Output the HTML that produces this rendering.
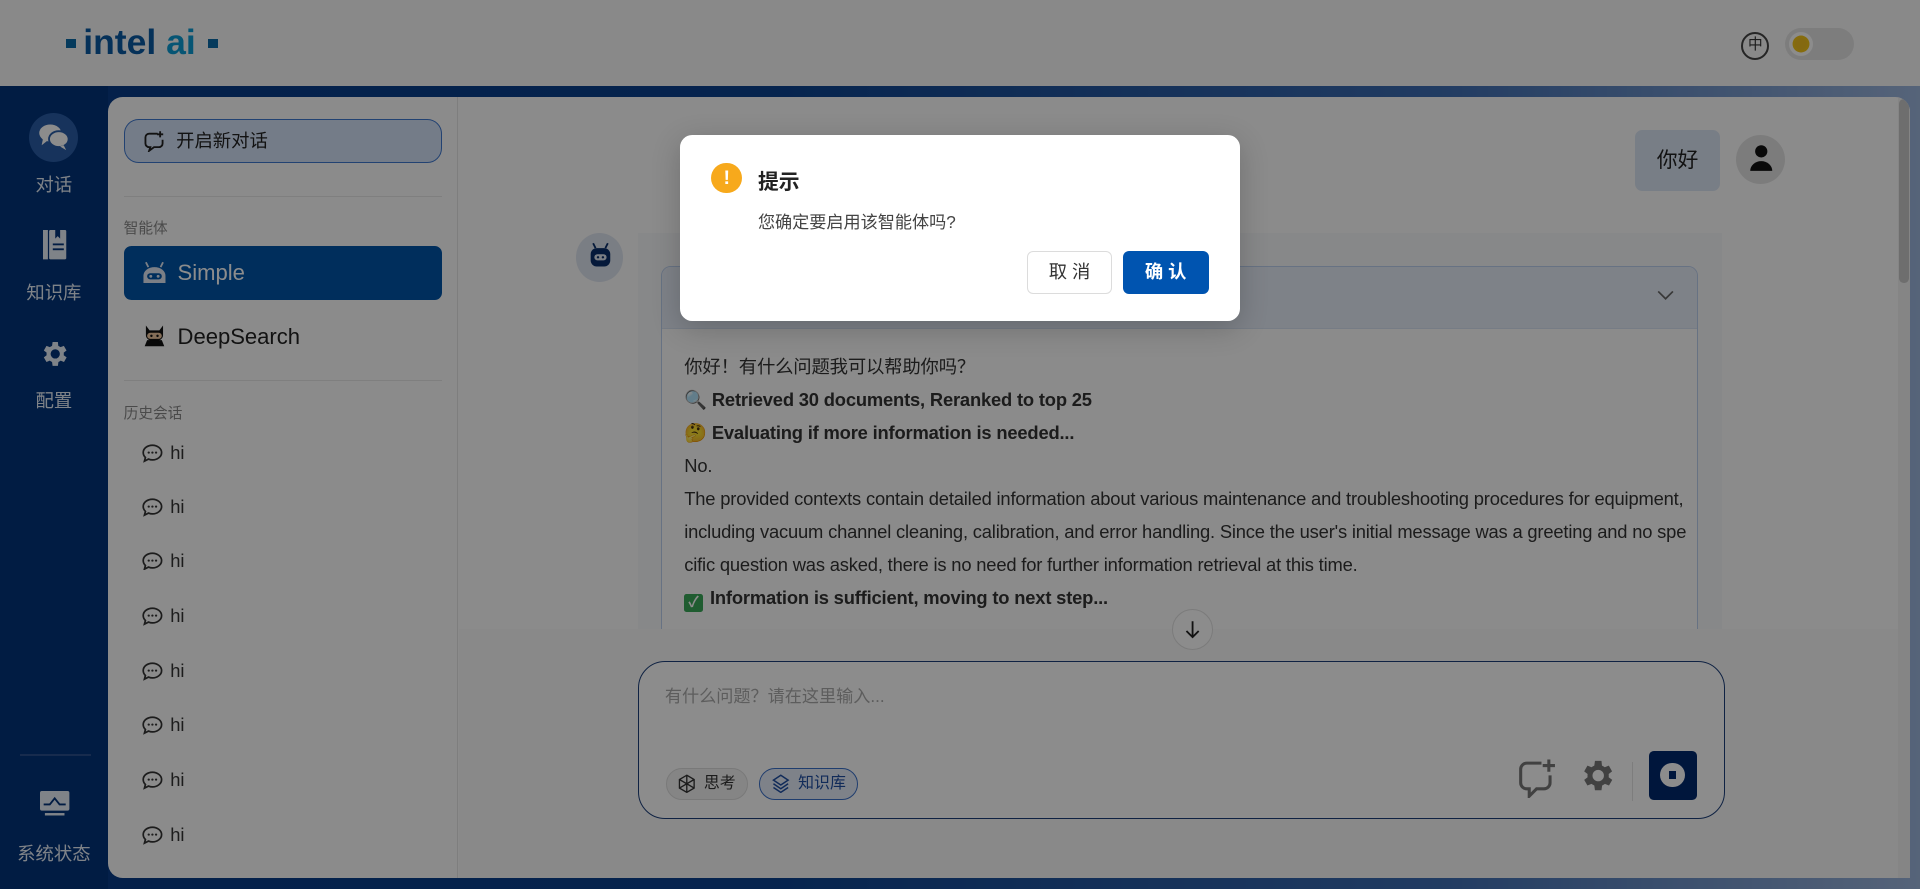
<!DOCTYPE html>
<html><head><meta charset="utf-8">
<style>
*{box-sizing:border-box;margin:0;padding:0}
html,body{width:1920px;height:889px;overflow:hidden}
body{font-family:"Liberation Sans","Noto Sans CJK SC",sans-serif;background:#fff}
#root{zoom:1.2244898;width:1568px;height:726px;position:relative;overflow:hidden;background:linear-gradient(90deg,#073a86 0%,#0b428f 40%,#3d6db3 75%,#9db6dd 100%)}
.abs{position:absolute}
.header{left:0;top:0;width:1568px;height:70px;background:#fafafa}
.logo{left:54px;top:18px;font-size:29px;font-weight:bold;color:#0a5aa3;letter-spacing:0}
.logo .ai{color:#0c9bd4}
.sq{display:inline-block;width:8px;height:8px;background:#0a6ba8;vertical-align:middle;margin:0 6px 2px 0}
.nav{left:0;top:70px;width:88px;height:656px;background:#03337a}
.navitem{position:absolute;left:0;width:88px;text-align:center;color:#e8eef8;font-size:15px}
.panel{left:88px;top:79px;width:1472px;height:638px;background:#fdfdfd;border-radius:12px 12px 0 12px;overflow:hidden}
.side{left:0;top:0;width:286px;height:638px;border-right:1px solid #e6e6e6}
.newbtn{left:13px;top:18px;width:260px;height:36px;border:1px solid #3f78cf;border-radius:12px;background:#d4e2f7;font-size:15px;color:#222;padding-left:42px;line-height:34px}
.hr{height:1px;background:#e8e8e8;left:13px;width:260px}
.lbl{left:13px;font-size:12px;color:#888}
.agent{left:13px;width:260px;height:44px;border-radius:6px;font-size:18px;padding-left:44px;line-height:44px;color:#222}
.hi{left:28px;font-size:15px;color:#333}
.hi svg{vertical-align:-3px;margin-right:6px}
.msgtxt{font-size:15px;color:#333;line-height:27px;letter-spacing:-0.15px}
.overlay{left:0;top:0;width:1568px;height:726px;background:rgba(0,0,0,0.45)}
.dlg{left:555px;top:110px;width:458px;height:152px;background:#fff;border-radius:10px;box-shadow:0 6px 24px rgba(0,0,0,.2)}
</style></head><body><div id="root">
<div class="abs header"></div>
<div class="abs logo"><span class="sq"></span>intel <span class="ai">ai</span> <span class="sq" style="margin-left:2px"></span></div>
<div class="abs" style="left:1422px;top:26px;width:23px;height:23px;border:2px solid #444;border-radius:50%;font-size:12px;text-align:center;line-height:19px;color:#333">中</div>
<div class="abs" style="left:1458px;top:23px;width:56px;height:26px;border-radius:13px;background:#e4e4e4"></div>
<div class="abs" style="left:1461px;top:26px;width:20px;height:20px;border-radius:50%;background:#fff"></div>
<div class="abs" style="left:1466px;top:31px;width:10px;height:10px;border-radius:50%;background:#f0c020;box-shadow:0 0 0 2px #f5c518"></div>

<div class="abs nav"></div>
<div class="abs" style="left:24px;top:92px;width:40px;height:40px;border-radius:50%;background:#2a5ea8"></div>
<svg class="abs" style="left:31px;top:100px" width="26" height="24" viewBox="0 0 26 24"><ellipse cx="10" cy="9" rx="9" ry="7" fill="#fff"/><path d="M4 14 L3 19 L8 15Z" fill="#fff"/><ellipse cx="17" cy="14" rx="8" ry="6.5" fill="#fff" stroke="#2a5ea8" stroke-width="1.5"/><path d="M21 19 L23 23 L18 20Z" fill="#fff"/></svg>
<div class="navitem" style="top:140px">对话</div>
<svg class="abs" style="left:35px;top:188px" width="20" height="24" viewBox="0 0 20 24"><rect x="0" y="0" width="4" height="24" fill="#e8eef8"/><rect x="5" y="0" width="14" height="24" rx="1" fill="#e8eef8"/><path d="M10 0v7l2-2 2 2V0" fill="#03337a"/><rect x="8" y="11" width="9" height="1.5" fill="#03337a"/><rect x="8" y="15" width="9" height="1.5" fill="#03337a"/></svg>
<div class="navitem" style="top:228px">知识库</div>
<svg class="abs" style="left:31px;top:276px" width="26" height="26" viewBox="0 0 24 24"><path fill="#e8eef8" d="M19.4 13a7.5 7.5 0 0 0 0-2l2.1-1.6-2-3.5-2.5 1a7 7 0 0 0-1.7-1L15 3h-4l-.4 2.9a7 7 0 0 0-1.7 1l-2.5-1-2 3.5L6.5 11a7.5 7.5 0 0 0 0 2l-2.1 1.6 2 3.5 2.5-1a7 7 0 0 0 1.7 1L11 21h4l.4-2.9a7 7 0 0 0 1.7-1l2.5 1 2-3.5zM13 15.5a3.5 3.5 0 1 1 0-7 3.5 3.5 0 0 1 0 7z"/></svg>
<div class="navitem" style="top:316px">配置</div>
<div class="abs" style="left:16px;top:616px;width:58px;height:1px;background:#2a4f8c"></div>
<svg class="abs" style="left:33px;top:646px" width="24" height="22" viewBox="0 0 24 22"><rect x="0" y="0" width="24" height="16" rx="1.5" fill="#e8eef8"/><path d="M3 11h5l4-5 4 5h5" stroke="#03337a" stroke-width="1.5" fill="none"/><rect x="4" y="18" width="16" height="2" fill="#e8eef8"/></svg>
<div class="navitem" style="top:686px">系统状态</div>

<div class="abs panel">
 <div class="abs side">
  <div class="abs newbtn">开启新对话</div>
  <svg class="abs" style="left:29px;top:27px" width="18" height="18" viewBox="0 0 18 18"><path d="M12 3H5a3 3 0 0 0-3 3v5a3 3 0 0 0 3 3h1l-1 3 4-3h4a3 3 0 0 0 3-3V8" stroke="#222" stroke-width="1.5" fill="none"/><path d="M14 1v5M11.5 3.5h5" stroke="#222" stroke-width="1.5"/></svg>
  <div class="abs hr" style="top:81px"></div>
  <div class="abs lbl" style="top:98px">智能体</div>
  <div class="abs agent" style="top:122px;background:#0054a8;color:#fff">Simple</div>
  <svg class="abs" style="left:27px;top:134px" width="22" height="20" viewBox="0 0 22 20"><path d="M4 1l2 4M18 1l-2 4" stroke="#e0e8f5" stroke-width="1.5"/><path d="M2 12a9 7 0 0 1 18 0v6H2z" fill="#e0e8f5"/><rect x="5" y="10" width="12" height="5" rx="2.5" fill="#0054a8"/><circle cx="8" cy="12.5" r="1.2" fill="#e0e8f5"/><circle cx="14" cy="12.5" r="1.2" fill="#e0e8f5"/></svg>
  <div class="abs agent" style="top:174px">DeepSearch</div>
  <svg class="abs" style="left:27px;top:185px" width="22" height="20" viewBox="0 0 22 20"><path d="M4 2l3 4h8l3-4v8a7 5 0 0 1-14 0z" fill="#111"/><rect x="5" y="8" width="12" height="5" rx="2.5" fill="#f0c8a0"/><circle cx="8.5" cy="10.5" r="1" fill="#111"/><circle cx="13.5" cy="10.5" r="1" fill="#111"/><path d="M3 19l2-5h12l2 5z" fill="#111"/></svg>
  <div class="abs hr" style="top:231px"></div>
  <div class="abs lbl" style="top:249px">历史会话</div>
  <div class="abs hi" style="top:282px"><svg width="17" height="15" viewBox="0 0 17 15"><path d="M8.5 1C4.4 1 1 3.6 1 7c0 1.5.7 2.9 1.8 4L2 14l3.3-1.7c1 .4 2 .7 3.2.7 4.1 0 7.5-2.7 7.5-6S12.6 1 8.5 1z" stroke="#333" stroke-width="1.4" fill="none"/><circle cx="5.5" cy="7" r="0.9" fill="#333"/><circle cx="8.5" cy="7" r="0.9" fill="#333"/><circle cx="11.5" cy="7" r="0.9" fill="#333"/></svg>hi</div>
  <div class="abs hi" style="top:326px"><svg width="17" height="15" viewBox="0 0 17 15"><path d="M8.5 1C4.4 1 1 3.6 1 7c0 1.5.7 2.9 1.8 4L2 14l3.3-1.7c1 .4 2 .7 3.2.7 4.1 0 7.5-2.7 7.5-6S12.6 1 8.5 1z" stroke="#333" stroke-width="1.4" fill="none"/><circle cx="5.5" cy="7" r="0.9" fill="#333"/><circle cx="8.5" cy="7" r="0.9" fill="#333"/><circle cx="11.5" cy="7" r="0.9" fill="#333"/></svg>hi</div>
  <div class="abs hi" style="top:370px"><svg width="17" height="15" viewBox="0 0 17 15"><path d="M8.5 1C4.4 1 1 3.6 1 7c0 1.5.7 2.9 1.8 4L2 14l3.3-1.7c1 .4 2 .7 3.2.7 4.1 0 7.5-2.7 7.5-6S12.6 1 8.5 1z" stroke="#333" stroke-width="1.4" fill="none"/><circle cx="5.5" cy="7" r="0.9" fill="#333"/><circle cx="8.5" cy="7" r="0.9" fill="#333"/><circle cx="11.5" cy="7" r="0.9" fill="#333"/></svg>hi</div>
  <div class="abs hi" style="top:415px"><svg width="17" height="15" viewBox="0 0 17 15"><path d="M8.5 1C4.4 1 1 3.6 1 7c0 1.5.7 2.9 1.8 4L2 14l3.3-1.7c1 .4 2 .7 3.2.7 4.1 0 7.5-2.7 7.5-6S12.6 1 8.5 1z" stroke="#333" stroke-width="1.4" fill="none"/><circle cx="5.5" cy="7" r="0.9" fill="#333"/><circle cx="8.5" cy="7" r="0.9" fill="#333"/><circle cx="11.5" cy="7" r="0.9" fill="#333"/></svg>hi</div>
  <div class="abs hi" style="top:460px"><svg width="17" height="15" viewBox="0 0 17 15"><path d="M8.5 1C4.4 1 1 3.6 1 7c0 1.5.7 2.9 1.8 4L2 14l3.3-1.7c1 .4 2 .7 3.2.7 4.1 0 7.5-2.7 7.5-6S12.6 1 8.5 1z" stroke="#333" stroke-width="1.4" fill="none"/><circle cx="5.5" cy="7" r="0.9" fill="#333"/><circle cx="8.5" cy="7" r="0.9" fill="#333"/><circle cx="11.5" cy="7" r="0.9" fill="#333"/></svg>hi</div>
  <div class="abs hi" style="top:504px"><svg width="17" height="15" viewBox="0 0 17 15"><path d="M8.5 1C4.4 1 1 3.6 1 7c0 1.5.7 2.9 1.8 4L2 14l3.3-1.7c1 .4 2 .7 3.2.7 4.1 0 7.5-2.7 7.5-6S12.6 1 8.5 1z" stroke="#333" stroke-width="1.4" fill="none"/><circle cx="5.5" cy="7" r="0.9" fill="#333"/><circle cx="8.5" cy="7" r="0.9" fill="#333"/><circle cx="11.5" cy="7" r="0.9" fill="#333"/></svg>hi</div>
  <div class="abs hi" style="top:549px"><svg width="17" height="15" viewBox="0 0 17 15"><path d="M8.5 1C4.4 1 1 3.6 1 7c0 1.5.7 2.9 1.8 4L2 14l3.3-1.7c1 .4 2 .7 3.2.7 4.1 0 7.5-2.7 7.5-6S12.6 1 8.5 1z" stroke="#333" stroke-width="1.4" fill="none"/><circle cx="5.5" cy="7" r="0.9" fill="#333"/><circle cx="8.5" cy="7" r="0.9" fill="#333"/><circle cx="11.5" cy="7" r="0.9" fill="#333"/></svg>hi</div>
  <div class="abs hi" style="top:594px"><svg width="17" height="15" viewBox="0 0 17 15"><path d="M8.5 1C4.4 1 1 3.6 1 7c0 1.5.7 2.9 1.8 4L2 14l3.3-1.7c1 .4 2 .7 3.2.7 4.1 0 7.5-2.7 7.5-6S12.6 1 8.5 1z" stroke="#333" stroke-width="1.4" fill="none"/><circle cx="5.5" cy="7" r="0.9" fill="#333"/><circle cx="8.5" cy="7" r="0.9" fill="#333"/><circle cx="11.5" cy="7" r="0.9" fill="#333"/></svg>hi</div>
 </div>
 <div class="abs" style="left:1462px;top:0;width:10px;height:638px;background:#f3f3f3"></div>
 <div class="abs" style="left:1463px;top:2px;width:8px;height:150px;background:#c8c8c8;border-radius:4px"></div>
</div>

<div class="abs" style="left:1335px;top:106px;width:70px;height:50px;background:#dbe5f4;border-radius:6px;font-size:17px;line-height:50px;text-align:center;color:#222">你好</div>
<div class="abs" style="left:1418px;top:110px;width:40px;height:40px;background:#e2e2e2;border-radius:50%"></div>
<svg class="abs" style="left:1428px;top:118px" width="20" height="24" viewBox="0 0 20 24"><circle cx="10" cy="6" r="5" fill="#111"/><path d="M1 22a9 8 0 0 1 18 0z" fill="#111"/></svg>
<div class="abs" style="left:470px;top:190px;width:39px;height:40px;background:#dfe5f0;border-radius:50%"></div>
<svg class="abs" style="left:479px;top:198px" width="22" height="22" viewBox="0 0 22 22"><path d="M5 1l2 4M17 1l-2 4" stroke="#0a2f6a" stroke-width="1.5"/><rect x="3" y="5" width="16" height="15" rx="5" fill="#0a2f6a"/><rect x="6" y="10" width="10" height="5" rx="2.5" fill="#dfe5f0"/><circle cx="9" cy="12.5" r="1" fill="#0a2f6a"/><circle cx="13" cy="12.5" r="1" fill="#0a2f6a"/></svg>
<div class="abs" style="left:521px;top:190px;width:885px;height:324px;background:#f6f7f9"></div>
<div class="abs" style="left:540px;top:217px;width:847px;height:300px;border:1px solid #bccfee;border-bottom:none;border-radius:8px 8px 0 0;background:#fdfdfd;overflow:hidden">
 <div style="height:51px;background:#e6edf8;border-bottom:1px solid #d8e2f2"></div>
 <div class="abs msgtxt" style="left:18px;top:68px;width:822px;word-break:break-all">你好！有什么问题我可以帮助你吗？<br><b>🔍 Retrieved 30 documents, Reranked to top 25</b><br><b>🤔 Evaluating if more information is needed...</b><br>No.<br>The provided contexts contain detailed information about various maintenance and troubleshooting procedures for equipment, including vacuum channel cleaning, calibration, and error handling. Since the user's initial message was a greeting and no specific question was asked, there is no need for further information retrieval at this time.<br><b><span style="display:inline-block;width:15px;height:15px;background:#3aa858;border-radius:2px;color:#fff;font-size:12px;line-height:15px;text-align:center;vertical-align:-2px;margin-right:6px">✓</span>Information is sufficient, moving to next step...</b></div>
</div>
<svg class="abs" style="left:1353px;top:236px" width="14" height="10" viewBox="0 0 14 10"><path d="M1 2l6 6 6-6" stroke="#666" stroke-width="1.4" fill="none"/></svg>
<div class="abs" style="left:375px;top:514px;width:1175px;height:203px;background:#fafafa"></div>
<div class="abs" style="left:957px;top:497px;width:34px;height:34px;border-radius:50%;background:#fff;border:1px solid #e0e0e0"></div>
<svg class="abs" style="left:967px;top:506px" width="14" height="16" viewBox="0 0 14 16"><path d="M7 1v13M2 9l5 5 5-5" stroke="#222" stroke-width="1.5" fill="none"/></svg>
<div class="abs" style="left:521px;top:540px;width:888px;height:129px;border:1.5px solid #1c3f7a;border-radius:22px;background:#fff"></div>
<div class="abs" style="left:543px;top:557px;font-size:14px;color:#aaa">有什么问题？请在这里输入...</div>
<div class="abs" style="left:544px;top:627px;width:67px;height:26px;border:1px solid #ddd;border-radius:13px;background:#f3f3f3;font-size:13px;line-height:24px;padding-left:30px;color:#333">思考</div>
<svg class="abs" style="left:553px;top:632px" width="16" height="16" viewBox="0 0 16 16"><path d="M8 1l6 3.5v7L8 15l-6-3.5v-7z M2 4.5l12 7M14 4.5l-12 7M8 1v14" stroke="#333" stroke-width="1.1" fill="none"/></svg>
<div class="abs" style="left:620px;top:627px;width:81px;height:26px;border:1px solid #3a6fc9;border-radius:13px;background:#e5edfa;font-size:13px;line-height:24px;padding-left:31px;color:#1f4fa3">知识库</div>
<svg class="abs" style="left:630px;top:632px" width="16" height="16" viewBox="0 0 16 16"><path d="M8 1l6 4-6 4-6-4z M2 8l6 4 6-4M2 11l6 4 6-4" stroke="#1f4fa3" stroke-width="1.2" fill="none"/></svg>
<svg class="abs" style="left:1239px;top:618px" width="34" height="34" viewBox="0 0 34 34"><path d="M20 5H8a5 5 0 0 0-5 5v11a5 5 0 0 0 5 5h2v6l6-6h6a5 5 0 0 0 5-5v-6" stroke="#777" stroke-width="2.5" fill="none"/><path d="M26 2v10M21 7h10" stroke="#777" stroke-width="2.5"/></svg>
<svg class="abs" style="left:1288px;top:617px" width="32" height="32" viewBox="0 0 24 24"><path fill="#777" d="M19.4 13a7.5 7.5 0 0 0 0-2l2.1-1.6-2-3.5-2.5 1a7 7 0 0 0-1.7-1L15 3h-4l-.4 2.9a7 7 0 0 0-1.7 1l-2.5-1-2 3.5L6.5 11a7.5 7.5 0 0 0 0 2l-2.1 1.6 2 3.5 2.5-1a7 7 0 0 0 1.7 1L11 21h4l.4-2.9a7 7 0 0 0 1.7-1l2.5 1 2-3.5zM13 15.5a3.5 3.5 0 1 1 0-7 3.5 3.5 0 0 1 0 7z"/></svg>
<div class="abs" style="left:1333px;top:622px;width:1px;height:32px;background:#e4e4e4"></div>
<div class="abs" style="left:1347px;top:613px;width:39px;height:40px;background:#00286e;border-radius:4px"></div>
<div class="abs" style="left:1356px;top:623px;width:20px;height:20px;background:#fff;border-radius:50%"></div>
<div class="abs" style="left:1363px;top:630px;width:6px;height:6px;background:#00286e"></div>

<div class="abs overlay"></div>

<div class="abs dlg">
 <div class="abs" style="left:26px;top:23px;width:25px;height:25px;border-radius:50%;background:#f7a91c;color:#fff;font-weight:bold;text-align:center;line-height:25px;font-size:16px">!</div>
 <div class="abs" style="left:64px;top:25px;font-size:17px;font-weight:bold;color:#222">提示</div>
 <div class="abs" style="left:64px;top:60px;font-size:14px;color:#444">您确定要启用该智能体吗?</div>
 <div class="abs" style="left:284px;top:95px;width:69px;height:35px;border:1px solid #dcdcdc;border-radius:5px;text-align:center;line-height:33px;font-size:15px;color:#333;letter-spacing:4px;padding-left:4px">取消</div>
 <div class="abs" style="left:362px;top:95px;width:70px;height:35px;background:#0054b0;border-radius:5px;text-align:center;line-height:35px;font-size:15px;color:#fff;font-weight:bold;letter-spacing:4px;padding-left:4px">确认</div>
</div>
</div></body></html>
